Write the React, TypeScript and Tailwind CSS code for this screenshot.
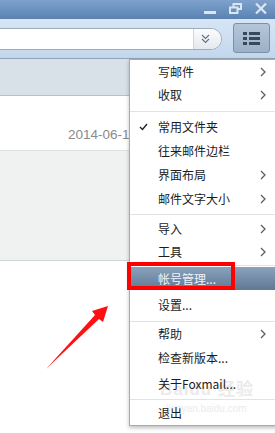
import React from 'react';

type Item = { label?: string; sep?: boolean; h: number; arrow?: boolean; check?: boolean; active?: boolean };

const items: Item[] = [
  { label: '写邮件', h: 23, arrow: true },
  { label: '收取', h: 24, arrow: true },
  { sep: true, h: 8 },
  { label: '常用文件夹', h: 24, check: true },
  { label: '往来邮件边栏', h: 24 },
  { label: '界面布局', h: 24, arrow: true },
  { label: '邮件文字大小', h: 24, arrow: true },
  { sep: true, h: 6 },
  { label: '导入', h: 23, arrow: true },
  { label: '工具', h: 24, arrow: true },
  { sep: true, h: 3 },
  { label: '帐号管理...', h: 23, active: true },
  { label: '设置...', h: 30 },
  { sep: true, h: 3 },
  { label: '帮助', h: 22, arrow: true },
  { label: '检查新版本...', h: 26 },
  { label: '关于Foxmail...', h: 26 },
  { sep: true, h: 4 },
  { label: '退出', h: 24 },
];

const Chevron = () => (
  <svg width="6" height="10" viewBox="0 0 6 10" className="absolute right-[12px]">
    <path d="M1 1 L5 5 L1 9" fill="none" stroke="#5a5f66" strokeWidth="1.3" />
  </svg>
);

function MenuRow({ item }: { item: Item }) {
  if (item.sep) {
    return (
      <div className="relative flex items-center" style={{ height: item.h }}>
        <div className="h-px w-full bg-[#e1e3e6]" />
      </div>
    );
  }
  return (
    <div
      className={
        'relative flex items-center pl-[28px] ' +
        (item.active ? 'bg-gradient-to-b from-[#8ba2bc] to-[#5f7894] text-[#eef3f8]' : 'text-[#1c1c1c]')
      }
      style={{ height: item.h }}
    >
      {item.check && (
        <svg width="9" height="8" viewBox="0 0 9 8" className="absolute left-[9px]">
          <path d="M1 4 L3.5 6.5 L8 1" fill="none" stroke="#222" strokeWidth="1.4" />
        </svg>
      )}
      <span>{item.label}</span>
      {item.arrow && <Chevron />}
    </div>
  );
}

export default function App() {
  return (
    <div
      className="relative w-[275px] h-[433px] overflow-hidden bg-white"
      style={{ fontFamily: '"Noto Sans CJK SC", "Noto Sans", sans-serif' }}
    >
      {/* title bar */}
      <div className="h-[19px] bg-gradient-to-b from-[#7ea2cc] to-[#5a82b2] flex items-start justify-end gap-[13px] pr-[8px] pt-[3px]">
        <div className="w-[12px] h-[11px] flex items-end">
          <div className="w-[12px] h-[3px] bg-[#dbe6f1]" />
        </div>
        <svg width="13" height="11" viewBox="0 0 13 11">
          <rect x="4.5" y="1" width="7.5" height="5" fill="none" stroke="#dbe6f1" strokeWidth="2" />
          <rect x="1" y="4.5" width="7.5" height="5.5" fill="#6a90be" stroke="#dbe6f1" strokeWidth="2" />
        </svg>
        <svg width="12" height="11" viewBox="0 0 12 11">
          <path d="M1 0.5 L11 10.5 M11 0.5 L1 10.5" stroke="#dbe6f1" strokeWidth="2.2" />
        </svg>
      </div>

      {/* toolbar */}
      <div className="h-[40px] bg-gradient-to-b from-[#d7e6f6] to-[#c3d7ec] border-b border-[#93a4b6] flex items-start">
        <div className="mt-[9px] ml-[-12px] w-[234px] h-[22px] flex bg-white border border-[#9eacbb] rounded-r-[11px] overflow-hidden">
          <div className="flex-1" />
          <div className="w-[28px] border-l border-[#cdd5dd] bg-gradient-to-b from-[#fbfcfd] to-[#e4e9ee] flex items-center justify-center pr-[4px]">
            <svg width="9" height="10" viewBox="0 0 9 10">
              <path d="M1 1 L4.5 4.5 L8 1 M1 5 L4.5 8.5 L8 5" fill="none" stroke="#66727e" strokeWidth="1.2" />
            </svg>
          </div>
        </div>
        <div className="ml-[11px] mt-[4px] w-[37px] h-[30px] rounded-[3px] border border-[#7b91aa] bg-gradient-to-b from-[#b4c6d9] to-[#9cb1c8] flex flex-col items-center justify-center gap-[2px]">
          {[0, 1, 2].map((i) => (
            <div key={i} className="flex gap-[2px]">
              <div className="w-[4px] h-[3px] bg-[#38495c]" />
              <div className="w-[11px] h-[3px] bg-[#38495c]" />
            </div>
          ))}
        </div>
      </div>

      {/* mail list underneath */}
      <div className="h-[37px] bg-[#d8e0e8] border-b border-[#b7c0ca]" />
      <div className="h-[54px] flex items-center pl-[68px] pt-[24px] text-[13.5px] text-[#8a8a8a]" style={{ fontFamily: '"Liberation Sans", sans-serif' }}>
        2014-06-12
      </div>
      <div className="h-[111px] bg-[#eff2f1] border-t border-[#dde1e1] border-b border-b-[#d3d7d7]" />

      {/* popup menu */}
      <div className="absolute left-[129px] top-[59px] w-[150px] bg-white border border-[#a3acb6] shadow-[0_2px_4px_rgba(0,0,0,0.25)] text-[12px] leading-none">
        {/* watermark under the menu text */}
        <div className="absolute left-[30px] top-[319px] text-[#ebebeb] pointer-events-none" style={{ fontFamily: '"Liberation Sans", sans-serif' }}>
          <div className="text-[17px] font-bold leading-none tracking-[1px]">
            Baidu <span style={{ fontFamily: '"Noto Sans CJK SC", sans-serif' }}>经验</span>
          </div>
          <div className="text-[10px] leading-none mt-[6px] ml-[6px]">jingyan.baidu.com</div>
        </div>
        {items.map((it, i) => (
          <MenuRow key={i} item={it} />
        ))}
      </div>

      {/* red highlight box */}
      <div className="absolute left-[127px] top-[262px] w-[108px] h-[28px] border-4 border-[#ff0000]" />

      {/* red arrow */}
      <svg className="absolute left-0 top-0" width="275" height="433" viewBox="0 0 275 433">
        <path d="M46 369 L95 315 L92 311 L108 306 L103 322 L99 319 Z" fill="#ff1010" />
      </svg>
    </div>
  );
}
